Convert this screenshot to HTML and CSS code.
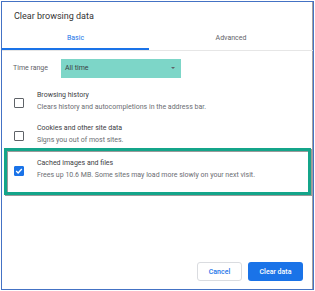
FILE: index.html
```html
<!DOCTYPE html>
<html lang="en">
<head>
    <meta charset="UTF-8">
    <meta name="viewport" content="width=device-width, initial-scale=1.0">
    <title>Clear browsing data</title>
    <link rel="stylesheet" href="styles.css">
</head>
<body>
    <div class="dialog">
        <div class="title">Clear browsing data</div>

        <div class="tabs">
            <div class="tab tab-active">Basic</div>
            <div class="tab">Advanced</div>
        </div>

        <div class="range-row">
            <span class="range-label">Time range</span>
            <div class="select">
                <span>All time</span>
                <span class="caret"></span>
            </div>
        </div>

        <div class="options">
            <div class="option">
                <span class="checkbox"></span>
                <div class="option-text">
                    <div class="option-name">Browsing history</div>
                    <div class="option-desc">Clears history and autocompletions in the address bar.</div>
                </div>
            </div>

            <div class="option">
                <span class="checkbox"></span>
                <div class="option-text">
                    <div class="option-name">Cookies and other site data</div>
                    <div class="option-desc">Signs you out of most sites.</div>
                </div>
            </div>

            <div class="option option-marked">
                <span class="checkbox checked">
                    <svg width="8" height="8" viewBox="0 0 8 8"><path d="M1.2 4.1 L3.1 5.9 L6.8 2.1" fill="none" stroke="#fff" stroke-width="1.4"/></svg>
                </span>
                <div class="option-text">
                    <div class="option-name">Cached images and files</div>
                    <div class="option-desc">Frees up 10.6 MB. Some sites may load more slowly on your next visit.</div>
                </div>
            </div>
        </div>

        <div class="actions">
            <button class="btn btn-cancel">Cancel</button>
            <button class="btn btn-primary">Clear data</button>
        </div>
    </div>
</body>
</html>
```

FILE: styles.css
```css
* {
    margin: 0;
    padding: 0;
    box-sizing: border-box;
}

body {
    font-family: Roboto, 'Liberation Sans', sans-serif;
    background: white;
    width: 315px;
    height: 291px;
}

.dialog {
    margin: 1px;
    width: 313px;
    height: 289px;
    border: 1px solid #4472c4;
    box-shadow: inset -1px 0 0 #a0a0a0;
    display: flex;
    flex-direction: column;
}

.title {
    height: 28px;
    line-height: 28px;
    padding-left: 12px;
    font-size: 9px;
    color: #333;
}

.tabs {
    display: flex;
    border-bottom: 1px solid #e6e6e6;
}

.tab {
    flex: 1;
    height: 20px;
    line-height: 17px;
    text-align: center;
    font-size: 7px;
    color: #5f6368;
}

.tab-active {
    flex: 0 0 147px;
    color: #1a73e8;
    border-bottom: 2px solid #1a73e8;
}

.range-row {
    display: flex;
    align-items: center;
    margin-top: 7px;
    padding-left: 11px;
    height: 20px;
}

.range-label {
    width: 48px;
    font-size: 7px;
    color: #5f6368;
}

.select {
    width: 120px;
    height: 19px;
    background: #7dd6c8;
    display: flex;
    align-items: center;
    justify-content: space-between;
    padding: 0 6px 0 4px;
    font-size: 7px;
    color: #3c4043;
}

.caret {
    width: 0;
    height: 0;
    border-left: 2.5px solid transparent;
    border-right: 2.5px solid transparent;
    border-top: 2.5px solid #5f6368;
}

.options {
    margin-top: 7px;
}

.option {
    display: flex;
    align-items: center;
    height: 33px;
    padding-left: 12px;
}

.checkbox {
    width: 10px;
    height: 10px;
    border: 1.5px solid #5f6368;
    border-radius: 1px;
    margin-right: 13px;
    margin-top: 2px;
    display: flex;
    align-items: center;
    justify-content: center;
}

.checkbox.checked {
    background: #1a73e8;
    border-color: #1a73e8;
}

.option-name {
    font-size: 7px;
    color: #3c4043;
    line-height: 11px;
}

.option-desc {
    font-size: 7px;
    color: #6b6e72;
    line-height: 12px;
}

.option-marked {
    margin: -3px 2px 0 2px;
    padding: 0 0 4px 7px;
    height: 47px;
    border: 3px solid #14a58a;
    box-shadow: 1px 1px 0 #9a9a9a, inset 1px 1px 0 #9a9a9a;
}

.actions {
    margin-top: auto;
    display: flex;
    justify-content: flex-end;
    gap: 6px;
    padding: 0 10px 8px 0;
}

.btn {
    height: 19px;
    border-radius: 3px;
    font-family: Roboto, 'Liberation Sans', sans-serif;
    font-size: 7px;
    font-weight: 500;
    cursor: pointer;
}

.btn-cancel {
    width: 45px;
    background: white;
    color: #1a73e8;
    border: 1px solid #dadce0;
}

.btn-primary {
    width: 55px;
    background: #1a73e8;
    color: white;
    border: none;
}
```
